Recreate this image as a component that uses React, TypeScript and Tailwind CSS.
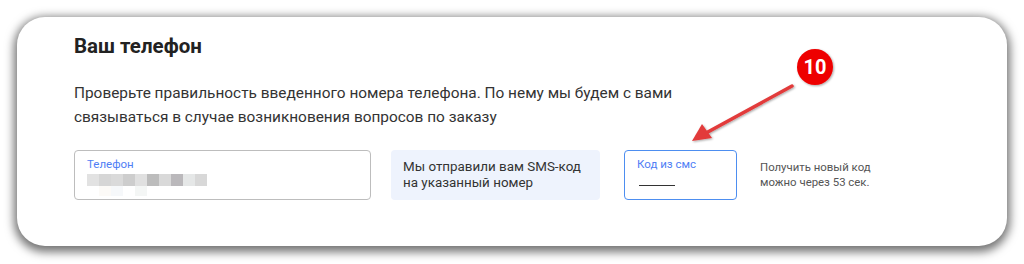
import React from "react";

const PIX_TOP = ["#e2e2e2", "#d6d6d6", "#dadada", "#cdcdcd", "#e0e0e0", "#bcbcbc", "#d9d9d9", "#bab8bb", "#e5e7e7", "#d8d8d8"];
const PIX_BOTTOM = ["#ffffff", "#fcfaf7", "#f6f8fa", "#ffffff", "#f4f6f5", "#ffffff"];

const App: React.FC = () => {
  return (
    <div className="relative h-[264px] w-[1024px] bg-white pt-[17px] pl-[17px] font-['Roboto',sans-serif]">
      <div className="h-[229px] w-[990px] rounded-[28px] bg-white pl-[57px] pt-[11px] shadow-[0_3px_10px_3px_rgba(0,0,0,0.55)]">
        <h1 className="text-[20.5px] font-bold leading-[36px] text-[#222]">Ваш телефон</h1>

        <p className="mt-[17px] text-[15.4px] leading-[24px] text-[#333]">
          Проверьте правильность введенного номера телефона. По нему мы будем с вами
          <br />
          связываться в случае возникновения вопросов по заказу
        </p>

        <div className="mt-[21px] flex items-center">
          {/* phone field */}
          <div className="h-[50px] w-[297px] rounded-[4px] border border-[#bdbdbd] pl-[12px] pt-[5px]">
            <div className="text-[11.5px] leading-[16px] text-[#4f7ef5]">Телефон</div>
            <div className="mt-[2px] flex">
              {PIX_TOP.map((c, i) => (
                <div key={i} className="h-[12px] w-[12px]" style={{ backgroundColor: c }} />
              ))}
            </div>
            <div className="flex">
              {PIX_BOTTOM.map((c, i) => (
                <div key={i} className="h-[10px] w-[12px]" style={{ backgroundColor: c }} />
              ))}
            </div>
          </div>

          {/* info */}
          <div className="ml-[20px] flex h-[50px] w-[209px] flex-col justify-center rounded-[4px] bg-[#eef3fd] pl-[12px] text-[13.4px] leading-[16px] text-[#333]">
            <span>Мы отправили вам SMS-код</span>
            <span>на указанный номер</span>
          </div>

          {/* code field */}
          <div className="ml-[24px] h-[50px] w-[113px] rounded-[4px] border border-[#4d8ef0] pl-[12px] pt-[5px]">
            <div className="text-[11.5px] leading-[16px] text-[#4f7ef5]">Код из смс</div>
            <div className="ml-[2px] mt-[13px] h-px w-[36px] bg-[#333]" />
          </div>

          <div className="ml-[23px] text-[11.4px] leading-[15px] text-[#555]">
            <div>Получить новый код</div>
            <div>можно через 53 сек.</div>
          </div>
        </div>
      </div>

      {/* annotation */}
      <svg className="absolute left-0 top-0" width="1024" height="264" viewBox="0 0 1024 264">
        <defs>
          <filter id="ds" x="-50%" y="-50%" width="200%" height="200%">
            <feDropShadow dx="1" dy="1" stdDeviation="1" floodColor="#000" floodOpacity="0.35" />
          </filter>
        </defs>
        <g filter="url(#ds)">
          <line x1="792" y1="86" x2="706" y2="133" stroke="#e23a3a" strokeWidth="3.5" strokeLinecap="round" />
          <polygon points="692,141 702,124 712,138" fill="#e23a3a" />
          <circle cx="815" cy="67" r="18" fill="#ee0000" />
        </g>
        <text x="815" y="74" textAnchor="middle" fontFamily="Roboto, sans-serif" fontWeight="700" fontSize="20" fill="#fff">10</text>
      </svg>
    </div>
  );
};

export default App;
